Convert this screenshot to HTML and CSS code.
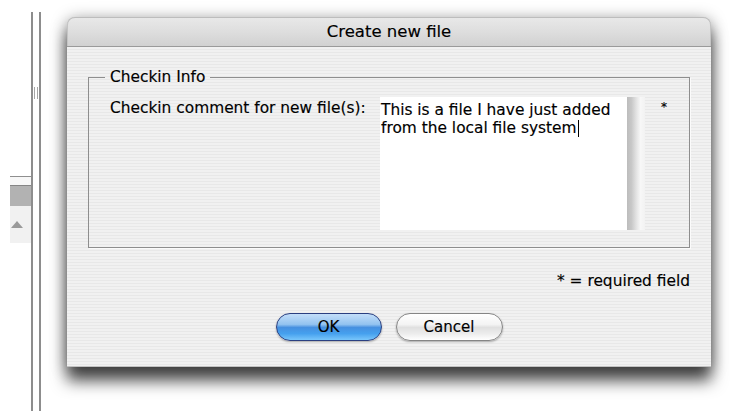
FILE: index.html
```html
<!DOCTYPE html>
<html lang="en">
<head>
<meta charset="utf-8">
<title>Create new file</title>
<link rel="stylesheet" href="styles.css">
</head>
<body>
<div class="desk">
  <div class="sidebar">
    <div class="sidebar-rule"></div>
    <div class="sidebar-gap"></div>
    <div class="sidebar-header"></div>
    <div class="sidebar-row"><span class="sort-arrow"></span></div>
  </div>
  <div class="splitter"><span class="grip"></span></div>

  <div class="sheet">
    <div class="titlebar">Create new file</div>
    <div class="sheet-body">
      <fieldset class="group">
        <legend class="group-title">Checkin Info</legend>
        <div class="field-row">
          <label class="field-label" for="comment">Checkin comment for new file(s):</label>
          <div class="textbox" id="comment">
            <div class="textbox-text">This is a file I have just added<br>from the local file system<span class="caret"></span></div>
            <div class="textbox-scroll"></div>
          </div>
          <span class="required-mark">*</span>
        </div>
      </fieldset>
      <p class="legend-note">* = required field</p>
      <div class="buttons">
        <button class="btn btn-default" type="button">OK</button>
        <button class="btn" type="button">Cancel</button>
      </div>
    </div>
  </div>
</div>
</body>
</html>
```
FILE: styles.css
```css
html, body {
  margin: 0;
  padding: 0;
  background: #ffffff;
}

body {
  width: 730px;
  height: 411px;
  overflow: hidden;
  font-family: "DejaVu Sans", "Noto Sans", sans-serif;
  color: #000;
  -webkit-text-stroke: 0.15px #000;
}

.desk {
  position: relative;
  display: flex;
  width: 730px;
  height: 411px;
}

/* Left list pane peeking out behind the sheet */
.sidebar {
  margin-left: 10px;
  width: 21px;
  padding-top: 176px;
  display: flex;
  flex-direction: column;
}

.sidebar-rule {
  height: 1px;
  background: #8f8f8f;
}

.sidebar-gap {
  height: 8px;
  background: #f7f7f7;
}

.sidebar-header {
  height: 20px;
  border-top: 1px solid #858585;
  background: #b2b2b2;
}

.sidebar-row {
  height: 37px;
  background: #f1f1f1;
  position: relative;
}

.sort-arrow {
  position: absolute;
  left: 1px;
  top: 15px;
  width: 0;
  height: 0;
  border-left: 6px solid transparent;
  border-right: 6px solid transparent;
  border-bottom: 7px solid #9a9a9a;
}

/* Split view divider */
.splitter {
  margin-top: 12px;
  width: 6px;
  border-left: 2px solid #8d8d8d;
  border-right: 2px solid #8d8d8d;
  background: #ffffff;
  position: relative;
}

.grip {
  position: absolute;
  left: 1px;
  top: 75px;
  width: 2px;
  height: 12px;
  border-left: 1px solid #a5a5a5;
  border-right: 1px solid #a5a5a5;
}

/* The modal sheet window */
.sheet {
  position: absolute;
  left: 67px;
  top: 17px;
  width: 644px;
  height: 350px;
  border-radius: 8px 8px 0 0;
  background: repeating-linear-gradient(to bottom, #f1f1f1 0px, #f1f1f1 2px, #e8e8e8 2px, #e8e8e8 3px);
  box-shadow: 0 14px 16px rgba(0, 0, 0, 0.68), 0 2px 16px rgba(0, 0, 0, 0.38);
  display: flex;
  flex-direction: column;
}

.titlebar {
  height: 29px;
  line-height: 29px;
  border-bottom: 1px solid #9a9a9a;
  border-radius: 8px 8px 0 0;
  background: linear-gradient(to bottom, #e9e9e9 0%, #dedede 50%, #d1d1d1 100%);
  box-shadow: inset 0 1px 0 #bdbdbd, inset 1px 0 0 #c4c4c4, inset -1px 0 0 #c4c4c4;
  text-align: center;
  font-size: 16.5px;
}

.sheet-body {
  flex: 1;
  padding: 21px 21px 0 21px;
  border-bottom: 1px solid #c2c2c2;
  display: flex;
  flex-direction: column;
}

.group {
  margin: 0;
  padding: 11px 0 17px 16px;
  border: 1px solid #8e8e8e;
  box-shadow: 1px 1px 0 #fbfbfb;
  min-width: 0;
}

.group-title {
  padding: 0 5px;
  font-size: 15.4px;
  line-height: 18px;
}

.field-row {
  display: flex;
  align-items: flex-start;
  margin-left: 5px;
  font-size: 15.4px;
  line-height: 18px;
}

.field-label {
  width: 270px;
  padding-top: 2px;
}

.textbox {
  display: flex;
  width: 265px;
  height: 133px;
}

.textbox-text {
  flex: 1;
  background: #ffffff;
  padding: 4px 0 0 1px;
  white-space: nowrap;
}

.caret {
  display: inline-block;
  width: 1px;
  height: 17px;
  margin-left: 1px;
  background: #000;
  vertical-align: -4px;
}

.textbox-scroll {
  width: 18px;
  background: linear-gradient(to right, #bcbcbc 0%, #c8c8c8 25%, #e6e6e6 55%, #f7f7f7 75%, #f2f2f2 100%);
}

.required-mark {
  margin-left: 16px;
  padding-top: 1px;
  font-size: 12px;
}

.legend-note {
  margin: 24px 0 0 0;
  text-align: right;
  font-size: 15.4px;
  line-height: 18px;
}

.buttons {
  display: flex;
  justify-content: center;
  gap: 14px;
  margin-top: 23px;
}

.btn {
  width: 107px;
  height: 28px;
  border: 1px solid #858585;
  border-radius: 14px;
  padding: 0;
  font-family: "DejaVu Sans", "Noto Sans", sans-serif;
  font-size: 15px;
  color: #000;
  -webkit-text-stroke: 0.15px #000;
  background: linear-gradient(to bottom, #ffffff 0%, #f4f4f4 40%, #e0e0e0 52%, #ececec 75%, #ffffff 100%);
  box-shadow: 0 1px 2px rgba(0, 0, 0, 0.3);
}

.btn-default {
  width: 106px;
  border-color: #2a3f80;
  background: linear-gradient(to bottom, #c3def9 0%, #93c3f0 40%, #4690e0 52%, #45a0ee 75%, #78c6fb 100%);
}
```
